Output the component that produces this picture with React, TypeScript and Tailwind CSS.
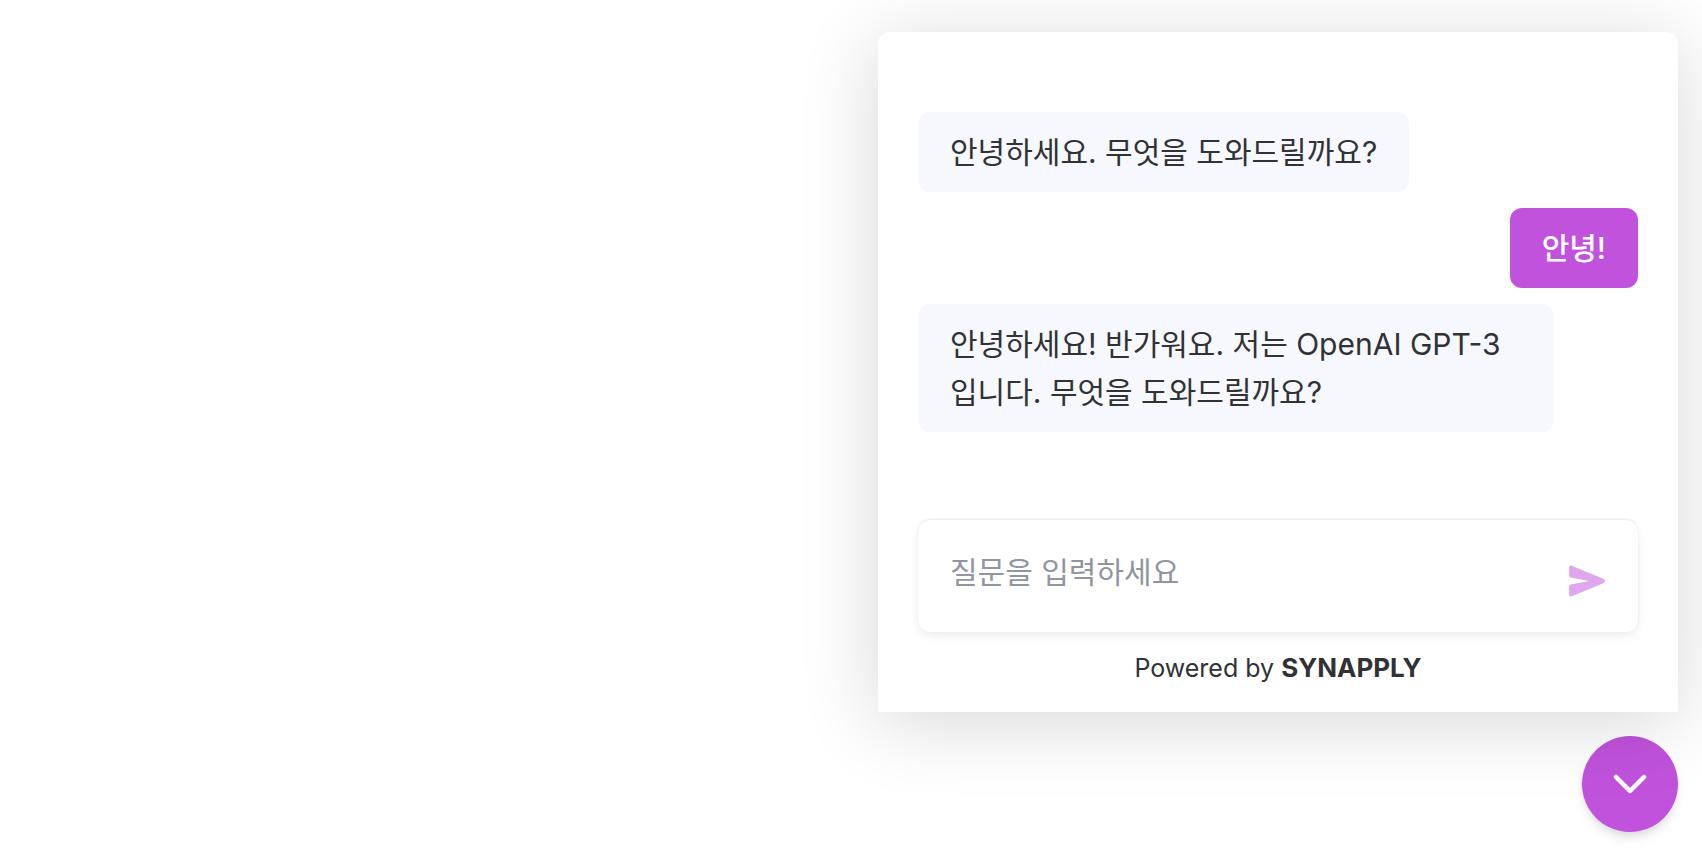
import React, { useState } from 'react';
import { IoSend } from 'react-icons/io5';

type Message = {
  id: number;
  from: 'bot' | 'user';
  text: string;
};

const initialMessages: Message[] = [
  { id: 1, from: 'bot', text: '안녕하세요. 무엇을 도와드릴까요?' },
  { id: 2, from: 'user', text: '안녕!' },
  { id: 3, from: 'bot', text: '안녕하세요! 반가워요. 저는 OpenAI GPT-3 입니다. 무엇을 도와드릴까요?' },
];

const ChatBubble: React.FC<{ message: Message }> = ({ message }) => {
  if (message.from === 'user') {
    return (
      <li className="self-end max-w-[636px] rounded-xl bg-[#c152dc] px-8 py-4 font-medium text-white">
        {message.text}
      </li>
    );
  }

  return (
    <li className="self-start max-w-[636px] rounded-xl bg-[#f7f8fd] px-8 py-4">
      {message.text}
    </li>
  );
};

const App: React.FC = () => {
  const [messages, setMessages] = useState(initialMessages);
  const [question, setQuestion] = useState('');
  const [isOpen, setIsOpen] = useState(true);

  const handleSubmit = (e: React.FormEvent) => {
    e.preventDefault();

    if (question.trim()) {
      setMessages([...messages, { id: messages.length + 1, from: 'user', text: question }]);
      setQuestion('');
    }
  };

  return (
    <div className="min-h-screen overflow-hidden bg-white flex flex-col items-end justify-end gap-6 pt-8 pr-6 pb-5 font-['Inter','Noto_Sans_CJK_KR',sans-serif] text-[30px] leading-12 text-[#303235]">
      {isOpen && (
        <section className="relative z-10 w-full max-w-[800px] rounded-t-xl bg-white px-10 pt-20 pb-6 shadow-[0_10px_80px_rgba(0,0,0,0.16)]">
          <ul className="flex flex-col gap-4">
            {messages.map((message) => (
              <ChatBubble key={message.id} message={message} />
            ))}
          </ul>

          <form
            onSubmit={handleSubmit}
            className="mt-22 flex items-end rounded-xl bg-white pt-7 shadow-[0_4px_12px_-2px_rgba(0,0,0,0.1),0_-1px_2px_rgba(0,0,0,0.08)]"
          >
            <input
              type="text"
              aria-label="질문을 입력하세요"
              placeholder="질문을 입력하세요"
              value={question}
              onChange={(e) => setQuestion(e.target.value)}
              className="h-12 mb-9 min-w-0 flex-1 bg-transparent px-8 placeholder-[#9095a0] focus:outline-none"
            />
            <button
              type="submit"
              aria-label="보내기"
              disabled={!question.trim()}
              className="mr-8 mb-8 text-[#c152dc] disabled:opacity-50"
            >
              <IoSend size={38} />
            </button>
          </form>

          <p className="mt-4 text-center text-[25px] leading-10">
            Powered by{' '}
            <a href="#" className="text-[26px] font-bold">
              SYNAPPLY
            </a>
          </p>
        </section>
      )}

      <button
        type="button"
        aria-label="채팅 닫기"
        onClick={() => setIsOpen(!isOpen)}
        className="flex size-24 items-center justify-center rounded-full bg-[#c152dc] text-white shadow-[0_8px_12px_-2px_rgba(0,0,0,0.1),0_4px_8px_-4px_rgba(0,0,0,0.1)]"
      >
        <svg viewBox="0 0 24 24" fill="currentColor" stroke="currentColor" strokeWidth="0.25" className="size-14">
          <path
            fillRule="evenodd"
            clipRule="evenodd"
            d="M18.601 8.39897C18.269 8.06702 17.7309 8.06702 17.3989 8.39897L12 13.7979L6.60099 8.39897C6.26904 8.06702 5.73086 8.06702 5.39891 8.39897C5.06696 8.73091 5.06696 9.2691 5.39891 9.60105L11.3989 15.601C11.7309 15.933 12.269 15.933 12.601 15.601L18.601 9.60105C18.9329 9.2691 18.9329 8.73091 18.601 8.39897Z"
          />
        </svg>
      </button>
    </div>
  );
};

export default App;
